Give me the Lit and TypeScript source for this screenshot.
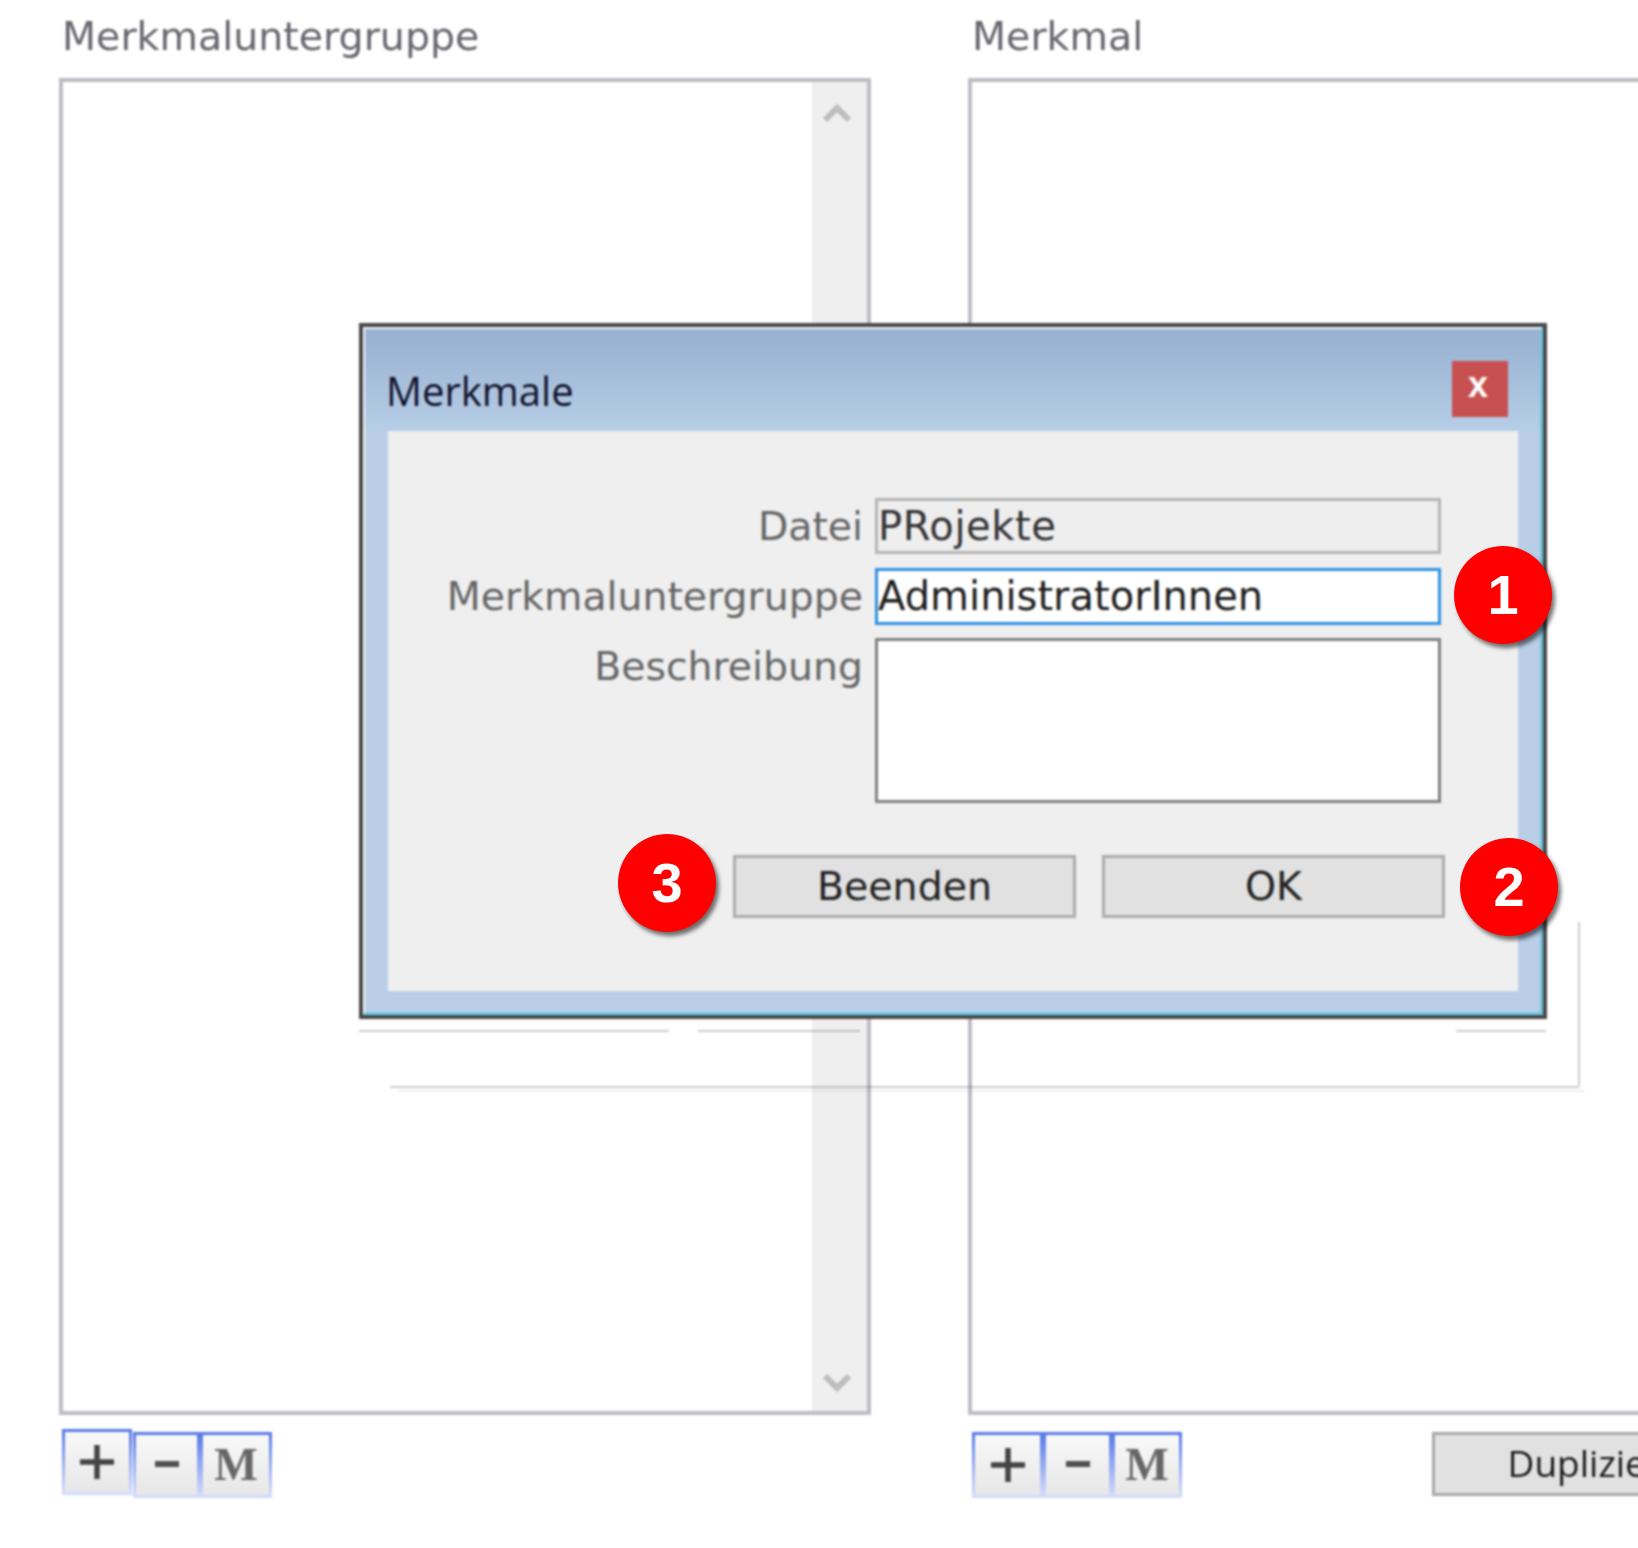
import { LitElement, html, css } from 'lit'
import { customElement } from 'lit/decorators.js'

const plusIcon = html`<svg viewBox="0 0 40 40" width="40" height="40">
  <path d="M20 3v34M3 20h34" stroke="#444" stroke-width="5.5" fill="none" />
</svg>`

const minusIcon = html`<svg viewBox="0 0 40 40" width="40" height="40">
  <path d="M8 19h24" stroke="#505050" stroke-width="6" fill="none" />
</svg>`

const chevron = (down: boolean) => html`<svg
  viewBox="0 0 28 22"
  width="28"
  height="22"
>
  <path
    d=${down ? 'M2 4l12 12L26 4' : 'M2 18L14 6l12 12'}
    stroke="#bdbdbd"
    stroke-width="6"
    fill="none"
  />
</svg>`

@customElement('app-root')
export class AppRoot extends LitElement {
  renderTools(variant: string) {
    return html`<div class="tools ${variant}">
      <div class="tool plus">${plusIcon}</div>
      <div class="tool minus">${minusIcon}</div>
      <div class="tool em">M</div>
    </div>`
  }

  render() {
    return html`
      <div class="stage">
        <div class="page">
          <section class="col col-left">
            <div class="col-label">Merkmaluntergruppe</div>
            <div class="list">
              <div class="scrollbar">${chevron(false)}${chevron(true)}</div>
            </div>
            <div class="toolbar">${this.renderTools('tools-left')}</div>
          </section>
          <section class="col col-right">
            <div class="col-label">Merkmal</div>
            <div class="list"></div>
            <div class="toolbar">
              ${this.renderTools('tools-right')}
              <div class="dup">Duplizieren</div>
            </div>
          </section>
        </div>

        <div class="dialog">
          <div class="dialog-inner">
            <div class="titlebar">
              <div class="title">Merkmale</div>
              <div class="close">x</div>
            </div>
            <div class="panel">
              <div class="form">
                <div class="label">Datei</div>
                <div class="field readonly">PRojekte</div>
                <div class="label">Merkmaluntergruppe</div>
                <div class="field focused">AdministratorInnen</div>
                <div class="label">Beschreibung</div>
                <div class="field area"></div>
              </div>
              <div class="actions">
                <div class="btn">Beenden</div>
                <div class="btn">OK</div>
              </div>
            </div>
          </div>
        </div>

        <div class="ghost g1"></div>
        <div class="ghost g2"></div>
        <div class="ghost g3"></div>
        <div class="ghost g4"></div>
        <div class="ghost g5"></div>
        <div class="ghost g6"></div>
      </div>

      <div class="badge b1">1</div>
      <div class="badge b2">2</div>
      <div class="badge b3">3</div>
    `
  }

  static styles = css`
    :host {
      display: block;
      position: relative;
      width: 1638px;
      height: 1548px;
      overflow: hidden;
      background: #fff;
      font-family: 'DejaVu Sans', sans-serif;
    }

    .stage {
      position: relative;
      width: 1638px;
      height: 1548px;
      filter: blur(0.9px);
    }

    .page {
      display: flex;
      gap: 97px;
      padding-left: 59px;
    }

    .col {
      flex: none;
    }

    .col-left {
      width: 812px;
    }

    .col-right {
      width: 800px;
    }

    .col-label {
      height: 78px;
      line-height: 73px;
      font-size: 39.5px;
      padding-left: 3px;
      color: #66666e;
    }

    .col-right .col-label {
      padding-left: 4px;
    }

    .list {
      box-sizing: border-box;
      height: 1337px;
      border: 4px solid #bcbcc4;
      display: flex;
      justify-content: flex-end;
      background: #fff;
    }

    .col-right .list {
      border-right: none;
    }

    .scrollbar {
      width: 55px;
      background: #efefef;
      display: flex;
      flex-direction: column;
      align-items: center;
      justify-content: space-between;
      padding: 20px 6px 17px 0;
      box-sizing: border-box;
    }

    .toolbar {
      display: flex;
      align-items: flex-start;
      padding-top: 17px;
    }

    .tools {
      display: flex;
      align-items: flex-start;
    }

    .tools-left {
      margin-left: 3px;
    }

    .tools-right {
      margin-left: 4px;
    }

    .tool {
      box-sizing: border-box;
      height: 66px;
      width: 70px;
      border: 3px solid;
      border-image: linear-gradient(#587ae6, #d3dcfb) 1;
      background: linear-gradient(#f9f9f9, #e7e7e7);
      display: flex;
      align-items: center;
      justify-content: center;
    }

    .tools-left .plus {
      margin-top: -3px;
      margin-right: 1px;
    }

    .tools-left .minus {
      width: 67px;
    }

    .tools-left .em {
      width: 72px;
    }

    .tools-right .plus {
      width: 71px;
    }

    .tools-right .minus {
      width: 69px;
    }

    .em {
      font-family: 'Liberation Serif', serif;
      font-weight: 700;
      font-size: 46px;
      color: #666;
      line-height: 1;
    }

    .dup {
      box-sizing: border-box;
      flex: none;
      margin-left: 250px;
      width: 348px;
      height: 64px;
      border: 3px solid #a8a8a8;
      background: #e1e1e1;
      font-family: 'Open Sans', sans-serif;
      font-size: 37px;
      line-height: 56px;
      color: #1c1c1c;
      text-align: center;
      white-space: nowrap;
    }

    .ghost {
      position: absolute;
      background: rgba(0, 0, 0, 0.2);
    }

    .g1 {
      left: 359px;
      top: 1030px;
      width: 310px;
      height: 2px;
    }

    .g2 {
      left: 698px;
      top: 1030px;
      width: 162px;
      height: 2px;
    }

    .g3 {
      left: 1456px;
      top: 1030px;
      width: 90px;
      height: 2px;
    }

    .g4 {
      left: 390px;
      top: 1086px;
      width: 1189px;
      height: 2px;
    }

    .g5 {
      left: 1578px;
      top: 922px;
      width: 2px;
      height: 164px;
    }

    .g6 {
      left: 398px;
      top: 1090px;
      width: 1187px;
      height: 2px;
      background: rgba(0, 0, 0, 0.06);
    }

    .dialog {
      position: absolute;
      left: 359px;
      top: 323px;
      box-sizing: border-box;
      width: 1188px;
      height: 696px;
      border: 4px solid #484848;
    }

    .dialog-inner {
      box-sizing: border-box;
      height: 100%;
      border-style: solid;
      border-width: 2px 3px 3px 2px;
      border-color: #f2f6fb #6fc4de #6fcbea #f2f6fb;
      background: #bacfe7;
      display: flex;
      flex-direction: column;
    }

    .titlebar {
      flex: none;
      height: 102px;
      box-sizing: border-box;
      background: linear-gradient(#9ab3d1 12%, #b7cee7);
      display: flex;
      justify-content: space-between;
      align-items: flex-start;
      padding: 32px 32px 0 21px;
    }

    .title {
      font-family: 'Open Sans', sans-serif;
      font-size: 40px;
      line-height: 53px;
      padding-top: 3px;
      color: #12122c;
    }

    .close {
      box-sizing: border-box;
      width: 56px;
      height: 56px;
      padding-right: 4px;
      background: #c75050;
      color: #fff;
      font-family: 'Liberation Sans', sans-serif;
      font-weight: 700;
      font-size: 36px;
      line-height: 48px;
      text-align: center;
    }

    .panel {
      flex: 1;
      margin: 0 22px 21px 23px;
      background: #efefef;
      padding-top: 67px;
    }

    .form {
      display: grid;
      grid-template-columns: 1fr 566px;
      column-gap: 12px;
      row-gap: 13px;
      margin-right: 77px;
      font-size: 39.4px;
    }

    .label {
      text-align: right;
      line-height: 57px;
      color: #666;
    }

    .field {
      box-sizing: border-box;
      height: 57px;
      border: 3px solid #808080;
      background: #fff;
      color: #333;
      font-size: 40px;
      line-height: 51px;
    }

    .readonly {
      height: 56px;
      border-color: #b4b4b4;
      background: #eee;
      letter-spacing: 0.6px;
    }

    .focused {
      border-color: #2f8fe4;
      color: #1c1c1c;
    }

    .area {
      height: 165px;
    }

    .actions {
      display: flex;
      justify-content: flex-end;
      gap: 26px;
      margin: 52px 73px 0 0;
    }

    .btn {
      box-sizing: border-box;
      width: 343px;
      height: 63px;
      border: 3px solid #acacac;
      background: #e1e1e1;
      color: #222;
      font-size: 39.5px;
      line-height: 57px;
      text-align: center;
    }

    .badge {
      position: absolute;
      width: 98px;
      height: 98px;
      border-radius: 50%;
      background: #fe0000;
      color: #fff;
      font-family: 'Liberation Sans', sans-serif;
      font-weight: 700;
      font-size: 56px;
      line-height: 98px;
      text-align: center;
      box-shadow: 3px 4px 4px rgba(0, 0, 0, 0.55);
    }

    .b1 {
      left: 1454px;
      top: 546px;
    }

    .b2 {
      left: 1460px;
      top: 838px;
    }

    .b3 {
      left: 618px;
      top: 834px;
    }
  `
}
